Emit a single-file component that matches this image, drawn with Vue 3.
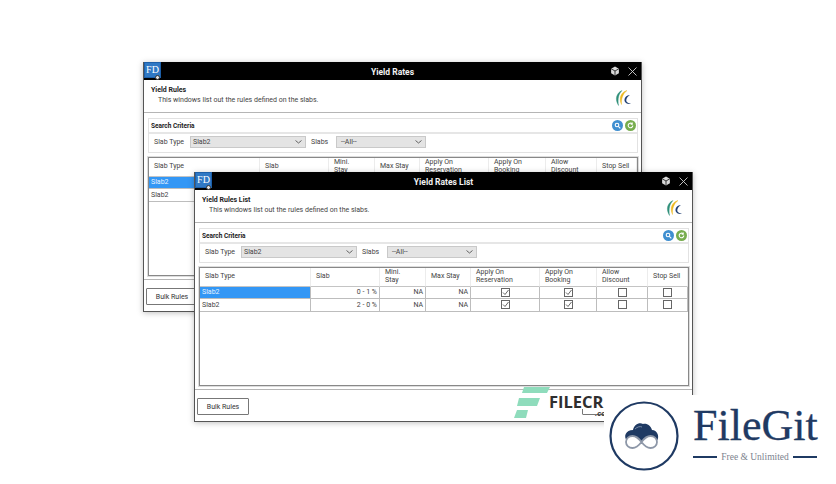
<script setup>
const windows = [
  { id: 'back', title: 'Yield Rates', head: 'Yield Rules' },
  { id: 'front', title: 'Yield Rates List', head: 'Yield Rules List' }
]

const rows = [
  { type: 'Slab2', slab: '0 - 1 %', selected: true },
  { type: 'Slab2', slab: '2 - 0 %', selected: false }
]
</script>

<template>
  <div class="page">
    <section v-for="win in windows" :key="win.id" class="win" :class="'win-' + win.id">
      <div class="fd-icon">
        FD
        <span class="fd-gear"></span>
      </div>

      <header class="titlebar">
        <span class="title">{{ win.title }}</span>
        <div class="title-actions">
          <svg width="10" height="10" viewBox="0 0 9 9" fill="none">
            <path d="M4.500.5l3.500 2v4l-3.500 2-3.500-2v-4z" fill="#d8d8d8" />
            <path d="M1 2.500l3.500 2 3.500-2M4.500 4.500v4" stroke="#222" stroke-width=".8" />
          </svg>
          <svg width="9" height="9" viewBox="0 0 9 9" fill="none" stroke="#d0d0d0" stroke-width=".9">
            <path d="M.5.500l8 8M8.500.500l-8 8" />
          </svg>
        </div>
      </header>

      <div class="head">
        <div>
          <div class="head-title">{{ win.head }}</div>
          <div class="head-sub">This windows list out the rules defined on the slabs.</div>
        </div>
        <svg class="head-logo" width="18" height="18" viewBox="0 0 18 18" fill="none">
          <path d="M8 1.500C2.500 4 .5 10 4.500 16.500 3.500 10 4.500 5 8 1.500z" fill="#2f8f7a" stroke="#2f8f7a" stroke-width=".4" />
          <path d="M13 1.500C7 3 4.500 9 7.500 15.500 7 9.500 9 4.500 13 1.500z" fill="#edb91f" stroke="#edb91f" stroke-width=".4" />
          <path d="M16 6C11.500 6 9.500 10 11 13c1.500 2 4 2.500 6 1.500-3-.2-5.500-1.500-4.500-4.500.5-1.700 2-3 3.500-4z" fill="#1f3f73" />
        </svg>
      </div>

      <div class="body">
        <div class="search">
          <div class="search-title">
            <span>Search Criteria</span>
            <div class="search-actions">
              <span class="round blue">
                <svg width="7" height="7" viewBox="0 0 7 7" fill="none" stroke="#fff" stroke-width="1.100">
                  <circle cx="3" cy="3" r="1.800" />
                  <path d="M4.300 4.300l2 2" />
                </svg>
              </span>
              <span class="round green">
                <svg width="7" height="7" viewBox="0 0 7 7" fill="none" stroke="#fff" stroke-width="1.100">
                  <path d="M5.800 3.500a2.300 2.300 0 1 1-.8-1.800" />
                  <path d="M5.200 .6v1.500H3.700" />
                </svg>
              </span>
            </div>
          </div>
          <div class="filters">
            <label class="filter-label label-type">Slab Type</label>
            <div class="select select-type">
              <span>Slab2</span>
              <svg width="7" height="4" viewBox="0 0 7 4" fill="none" stroke="#555" stroke-width=".9"><path d="M.5.500l3 2.500 3-2.500" /></svg>
            </div>
            <label class="filter-label label-slabs">Slabs</label>
            <div class="select select-slabs">
              <span>--All--</span>
              <svg width="7" height="4" viewBox="0 0 7 4" fill="none" stroke="#555" stroke-width=".9"><path d="M.5.500l3 2.500 3-2.500" /></svg>
            </div>
          </div>
        </div>

        <div class="grid">
          <div class="grid-row grid-head">
            <div class="cell">Slab Type</div>
            <div class="cell">Slab</div>
            <div class="cell">Mini.<br />Stay</div>
            <div class="cell">Max Stay</div>
            <div class="cell">Apply On<br />Reservation</div>
            <div class="cell">Apply On<br />Booking</div>
            <div class="cell">Allow<br />Discount</div>
            <div class="cell">Stop Sell</div>
          </div>
          <div v-for="row in rows" :key="row.slab" class="grid-row grid-data">
            <div class="cell cell-type" :class="{ selected: row.selected }">{{ row.type }}</div>
            <div class="cell num">{{ row.slab }}</div>
            <div class="cell num">NA</div>
            <div class="cell num">NA</div>
            <div class="cell check"><span class="box"><svg width="7" height="7" viewBox="0 0 7 7" fill="none" stroke="#555" stroke-width=".9"><path d="M1 3.500l2 2L6.500 1" /></svg></span></div>
            <div class="cell check"><span class="box"><svg width="7" height="7" viewBox="0 0 7 7" fill="none" stroke="#555" stroke-width=".9"><path d="M1 3.500l2 2L6.500 1" /></svg></span></div>
            <div class="cell check"><span class="box"></span></div>
            <div class="cell check"><span class="box"></span></div>
          </div>
        </div>
      </div>

      <footer class="foot">
        <button class="btn">Bulk Rules</button>
        <button class="btn btn-empty"></button>
      </footer>
    </section>

    <div class="filecr">
      <svg class="filecr-mark" width="36" height="33" viewBox="0 0 36 33" fill="#8fdcbc">
        <path d="M10 1h26l-3 6H8z" />
        <path d="M5 12h21l-3 8H3z" />
        <path d="M3 24h11l-2 8H0z" />
      </svg>
      <div class="filecr-name">FILECR</div>
      <div class="filecr-tld">.co</div>
    </div>

    <div class="filegit">
      <div class="filegit-logo">
        <svg width="70" height="70" viewBox="0 0 70 70" fill="none">
          <circle cx="35" cy="35" r="33.500" stroke="#1f3a63" stroke-width="2.200" />
          <path d="M18 40c-4-5-1-11 6-11 1-5 6-8 10-6 4-1 8 2 9 6 5 0 8 6 5 11z" fill="#1f3a63" />
          <path d="M32.500 41c-3-4-6-6-9-6-3.500 0-6.500 2.500-6.500 6s3 6 6.500 6c3 0 6-2 9-6zm0 0c3-4 6-6 9-6 3.500 0 6.500 2.500 6.500 6s-3 6-6.500 6c-3 0-6-2-9-6z" fill="#fff" stroke="#8d97a8" stroke-width="1.800" />
          <path d="M26 28c2-2 5-3 7-2" stroke="#8fa0b8" stroke-width=".8" />
        </svg>
      </div>
      <div class="filegit-text">
        <div class="filegit-name">FileGit</div>
        <div class="filegit-tag">
          <span class="tag-line"></span>
          <span>Free &amp; Unlimited</span>
          <span class="tag-line"></span>
        </div>
      </div>
    </div>
  </div>
</template>

<style scoped>
.page {
  position: relative;
  width: 836px;
  height: 484px;
  overflow: hidden;
  background: #fff;
  font-family: Roboto, "Noto Sans", sans-serif;
  font-size: 7px;
  color: #333;
}

.win {
  position: absolute;
  width: 499px;
  height: 250px;
  box-sizing: border-box;
  display: flex;
  flex-direction: column;
  background: #fff;
  border: 1px solid #555;
  border-top: 0;
  box-shadow: 0 1px 6px rgba(0, 0, 0, 0.25);
}

.win-back {
  left: 143px;
  top: 62px;
}

.win-front {
  left: 194px;
  top: 172px;
}

.fd-icon {
  position: absolute;
  left: 0;
  top: 0;
  z-index: 2;
  width: 17px;
  height: 16px;
  box-sizing: border-box;
  border: 1px solid #1d5fa8;
  background: #2f78c4;
  color: #fff;
  font-family: "Liberation Serif", serif;
  font-size: 10px;
  line-height: 14px;
  text-align: center;
}

.fd-gear {
  position: absolute;
  right: 0;
  bottom: -3px;
  width: 5px;
  height: 5px;
  border-radius: 50%;
  background: #e4e4e4;
  border: 1px solid #333;
  box-sizing: border-box;
}

.titlebar {
  position: relative;
  flex: 0 0 18px;
  box-sizing: border-box;
  padding-top: 1px;
  display: flex;
  align-items: center;
  justify-content: center;
  background: #000;
  color: #f2f2f2;
  font-size: 8.500px;
  font-weight: 700;
}

.title-actions {
  position: absolute;
  right: 4px;
  top: 4px;
  display: flex;
  align-items: center;
  gap: 8px;
}

.head {
  flex: 0 0 33px;
  display: flex;
  justify-content: space-between;
  align-items: center;
  padding: 0 9px 2px 7px;
  border-bottom: 1px solid #b5b5b5;
  box-sizing: border-box;
}

.head-title {
  font-weight: 700;
  color: #222;
  line-height: 10px;
}

.head-sub {
  padding-left: 7px;
  line-height: 10px;
  color: #444;
}

.head-logo {
  margin-top: 5px;
}

.body {
  flex: 0 0 167px;
  padding: 5px 3px 3px 4px;
  box-sizing: border-box;
  display: flex;
  flex-direction: column;
  gap: 4px;
  border-bottom: 1px solid #b5b5b5;
}

.search {
  flex: 0 0 35px;
  box-sizing: border-box;
  border: 1px solid #e2e2e2;
}

.search-title {
  height: 13px;
  display: flex;
  align-items: center;
  justify-content: space-between;
  padding-left: 2px;
  font-size: 6.500px;
  font-weight: 700;
  color: #222;
  border-bottom: 2px solid #e6e6e6;
}

.search-actions {
  display: flex;
  gap: 2px;
  padding-right: 1px;
}

.round {
  width: 11px;
  height: 11px;
  border-radius: 50%;
  display: flex;
  align-items: center;
  justify-content: center;
}

.blue {
  background: #3f8fd0;
}

.green {
  background: #77ad4e;
}

.filters {
  height: 18px;
  box-sizing: border-box;
  padding: 0 0 2px 5px;
  display: flex;
  align-items: center;
}

.filter-label {
  color: #444;
}

.label-type {
  width: 36px;
}

.label-slabs {
  width: 25px;
  margin-left: 5px;
}

.select {
  height: 12px;
  box-sizing: border-box;
  display: flex;
  align-items: center;
  justify-content: space-between;
  padding: 0 3px 0 2px;
  background: #e4e4e4;
  border: 1px solid #c9c9c9;
  color: #444;
}

.select-type {
  width: 116px;
}

.select-slabs {
  width: 90px;
  padding-left: 4px;
}

.grid {
  flex: 1;
  box-sizing: border-box;
  border: 1px solid #888;
  outline: 1px solid #ddd;
}

.grid-row {
  display: grid;
  grid-template-columns: 111px 69px 46px 45px 69px 57px 51px 1fr;
}

.grid-head {
  height: 18.500px;
  line-height: 7.500px;
  color: #444;
}

.grid-head .cell {
  display: flex;
  align-items: center;
  padding-left: 5px;
  border-right: 1px solid #ececec;
  border-bottom: 1px solid #c4c4c4;
}

.grid-data {
  height: 12.500px;
}

.grid-data .cell {
  display: flex;
  align-items: center;
  box-sizing: border-box;
  border-right: 1px solid #bdbdbd;
  border-bottom: 1px solid #bdbdbd;
  padding: 0 2px;
  color: #444;
}

.num {
  justify-content: flex-end;
}

.grid-data .check {
  justify-content: center;
}

.grid-data .selected {
  background: #3397f5;
  color: #e6f2ff;
}

.box {
  width: 9px;
  height: 9px;
  box-sizing: border-box;
  border: 1px solid #666;
  background: #fff;
  display: flex;
  align-items: center;
  justify-content: center;
}

.foot {
  flex: 1;
  display: flex;
  justify-content: space-between;
  align-items: flex-start;
  padding: 8px 58px 0 2px;
}

.btn {
  width: 52px;
  height: 17px;
  padding: 0;
  background: #fff;
  border: 1px solid #777;
  border-radius: 1px;
  font: 7px Roboto, sans-serif;
  color: #333;
}

.filecr {
  position: absolute;
  left: 514px;
  top: 386px;
  width: 90px;
  height: 33px;
}

.filecr-mark {
  position: absolute;
  left: 0;
  top: 0;
}

.filecr-name {
  position: absolute;
  left: 35px;
  top: 9px;
  width: 55px;
  height: 14px;
  background: #fff;
  font-family: "Open Sans", sans-serif;
  font-size: 16.500px;
  line-height: 14px;
  font-weight: 700;
  color: #2f2f2f;
}

.filecr-tld {
  position: absolute;
  left: 81px;
  top: 24px;
  font-size: 8px;
  line-height: 8px;
  font-weight: 700;
  font-style: italic;
  color: #333;
}

.filegit {
  position: absolute;
  left: 604px;
  top: 395px;
  width: 232px;
  height: 89px;
  background: #fff;
  display: flex;
  color: #1f3a63;
}

.filegit-logo {
  margin: 6px 0 0 5px;
}

.filegit-text {
  margin-left: 14px;
  width: 124px;
}

.filegit-name {
  font-family: "Liberation Serif", serif;
  font-size: 44px;
  line-height: 46px;
  margin-top: 8px;
  -webkit-text-stroke: 0.3px #1f3a63;
}

.filegit-tag {
  display: flex;
  align-items: center;
  justify-content: space-between;
  font-family: "Liberation Serif", serif;
  font-size: 9.500px;
  line-height: 10px;
  color: #7d838e;
  margin-top: 3px;
}

.tag-line {
  width: 24px;
  height: 2px;
  background: #1f3a63;
}
</style>
